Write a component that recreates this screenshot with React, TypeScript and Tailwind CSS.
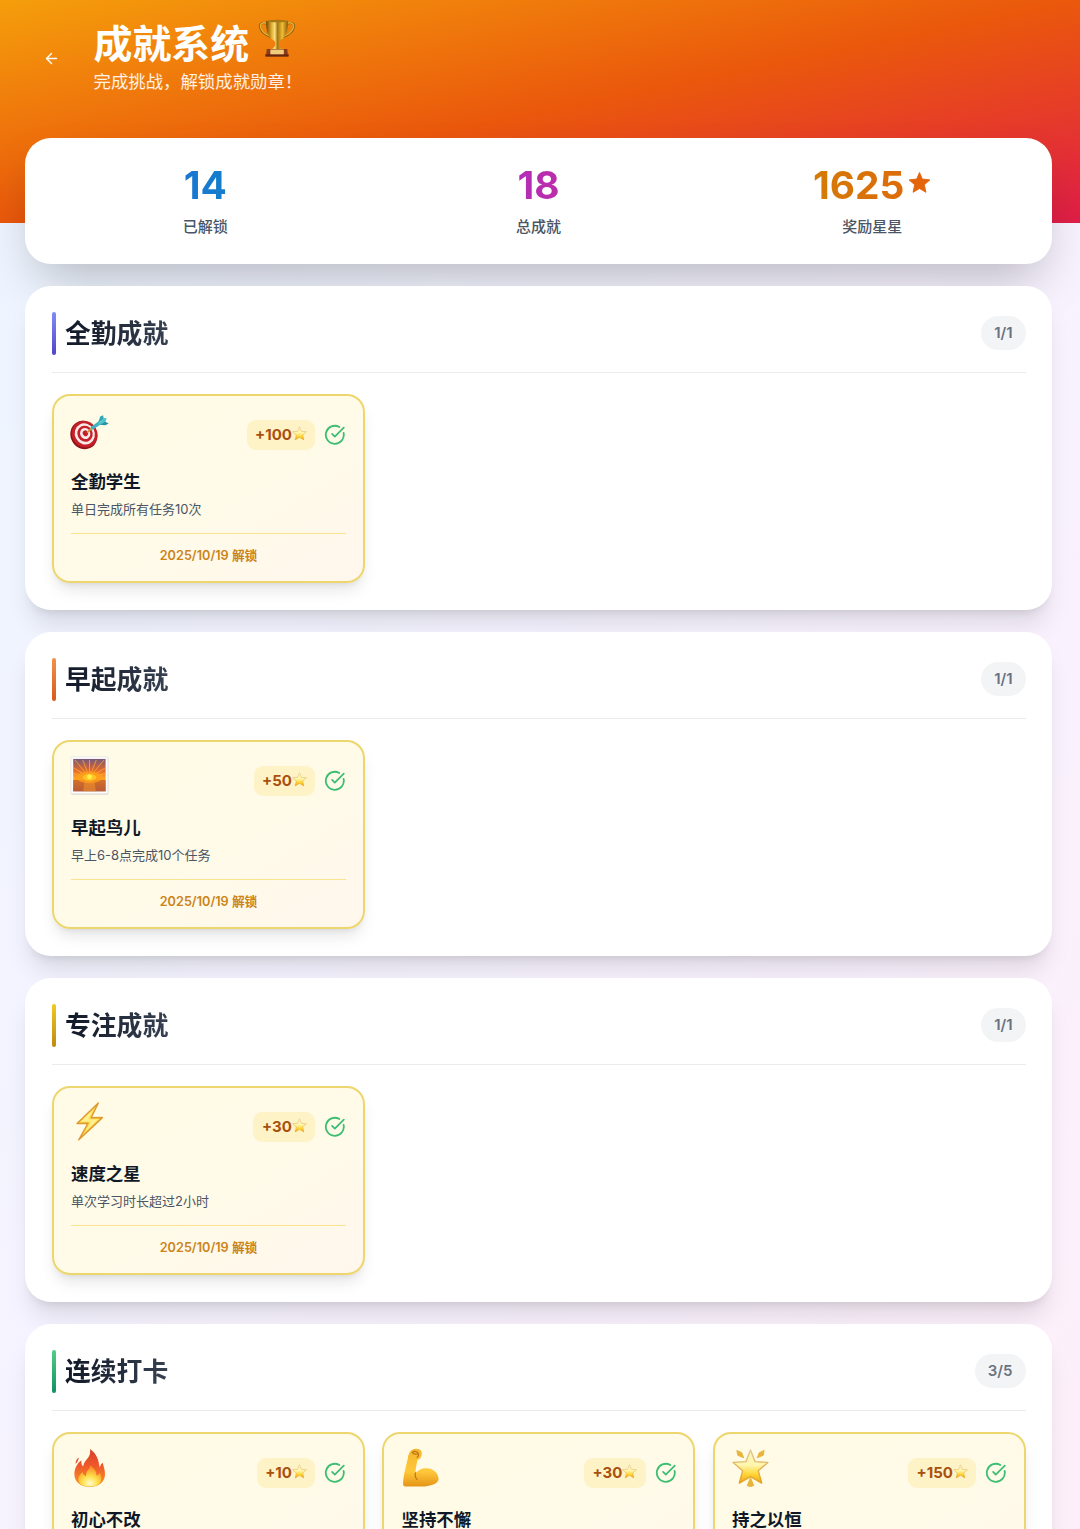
import { ReactNode } from "react"
import { ArrowLeft, CircleCheckBig } from "lucide-react"

type EmojiName = "target" | "sunrise" | "bolt" | "fire" | "muscle" | "glowStar"

interface Achievement {
  title: string
  description?: string
  reward: number
  emoji: EmojiName
  unlockedAt?: string
}

interface Category {
  name: string
  progress: string
  bar: string
  items: Achievement[]
}

const categories: Category[] = [
  {
    name: "全勤成就", progress: "1/1", bar: "from-[#818cf8] to-[#4f46c8]",
    items: [{ title: "全勤学生", description: "单日完成所有任务10次", reward: 100, emoji: "target", unlockedAt: "2025/10/19" }],
  },
  {
    name: "早起成就", progress: "1/1", bar: "from-[#f0924a] to-[#d9591a]",
    items: [{ title: "早起鸟儿", description: "早上6-8点完成10个任务", reward: 50, emoji: "sunrise", unlockedAt: "2025/10/19" }],
  },
  {
    name: "专注成就", progress: "1/1", bar: "from-[#f0c924] to-[#c08a10]",
    items: [{ title: "速度之星", description: "单次学习时长超过2小时", reward: 30, emoji: "bolt", unlockedAt: "2025/10/19" }],
  },
  {
    name: "连续打卡", progress: "3/5", bar: "from-[#4fcf85] to-[#129065]",
    items: [
      { title: "初心不改", reward: 10, emoji: "fire" },
      { title: "坚持不懈", reward: 30, emoji: "muscle" },
      { title: "持之以恒", reward: 150, emoji: "glowStar" },
    ],
  },
]

const STAR = "M20 2 L25.2 14.2 L38.4 15.3 L28.4 24 L31.4 37 L20 30.2 L8.6 37 L11.6 24 L1.6 15.3 L14.8 14.2 Z"

function Defs() {
  return (
    <svg width="0" height="0" className="absolute" aria-hidden="true">
      <defs>
        <linearGradient id="starFill" x1="0" y1="0" x2="0" y2="1">
          <stop offset="0" stopColor="#fff3b8" />
          <stop offset=".45" stopColor="#fff6b0" />
          <stop offset=".72" stopColor="#ffd83a" />
          <stop offset="1" stopColor="#f2a413" />
        </linearGradient>
        <linearGradient id="starEdge" x1="0" y1="0" x2="0" y2="1">
          <stop offset="0" stopColor="#e3c89a" />
          <stop offset="1" stopColor="#e2a11c" />
        </linearGradient>
        <linearGradient id="gold" x1="0" x2="1" y1="0" y2="0">
          <stop offset="0" stopColor="#6e4305" />
          <stop offset=".25" stopColor="#e2ad2c" />
          <stop offset=".4" stopColor="#f8e184" />
          <stop offset=".52" stopColor="#a8760e" />
          <stop offset=".75" stopColor="#edbd38" />
          <stop offset="1" stopColor="#8a5805" />
        </linearGradient>
        <linearGradient id="flame" x1="0" y1="0" x2="0" y2="1">
          <stop offset="0" stopColor="#d9402a" />
          <stop offset=".45" stopColor="#f0592b" />
          <stop offset="1" stopColor="#f8a023" />
        </linearGradient>
        <radialGradient id="flameCore" cx=".5" cy=".85" r=".75">
          <stop offset="0" stopColor="#fffbd0" />
          <stop offset=".45" stopColor="#ffe04b" />
          <stop offset="1" stopColor="#f9932b" />
        </radialGradient>
        <linearGradient id="skin" x1="0" y1="0" x2="0" y2="1">
          <stop offset="0" stopColor="#f5b52b" />
          <stop offset=".6" stopColor="#ffc83a" />
          <stop offset="1" stopColor="#e59418" />
        </linearGradient>
        <linearGradient id="sky" x1="0" y1="0" x2="0" y2="1">
          <stop offset="0" stopColor="#76587c" />
          <stop offset=".35" stopColor="#e0682f" />
          <stop offset=".6" stopColor="#ffa51f" />
          <stop offset="1" stopColor="#8c4a50" />
        </linearGradient>
      </defs>
    </svg>
  )
}

function StarEmoji({ className }: { className: string }) {
  return (
    <svg viewBox="0 0 40 40" className={className}>
      <path d={STAR} fill="url(#starFill)" stroke="url(#starEdge)" strokeWidth="1.6" strokeLinejoin="round" />
    </svg>
  )
}

function Trophy() {
  return (
    <svg viewBox="0 0 40 40" className="h-[39px] w-[38px]">
      <path d="M9.5 5.5C4 3.2 1.5 5.8 2.2 9.3c.9 4.6 5.4 7.8 11.3 10.2M30.5 5.5c5.5-2.3 8 .3 7.3 3.8-.9 4.6-5.4 7.8-11.3 10.2" fill="none" stroke="#8d5e0a" strokeWidth="2.3" />
      <path d="M9.5 5.2C4.5 3.2 2 5.8 2.6 9c.9 4.3 5.2 7.5 10.9 10M30.5 5.2c5-2 7.5.6 6.9 3.8-.9 4.3-5.2 7.5-10.9 10" fill="none" stroke="#e6b338" strokeWidth="1.4" />
      <path d="M8.5 2.5h23c.2 9.500-2 17.500-8.300 20.700-1.300.8-1.500 3-1.200 5 .2 1.500 1.800 2.800 3.800 4.300H14.200c2-1.500 3.600-2.800 3.800-4.300.3-2 .1-4.200-1.200-5C10.500 20 8.300 12 8.500 2.500z" fill="url(#gold)" />
      <ellipse cx="20" cy="2.7" rx="11.5" ry="1.3" fill="#a87813" />
      <path d="M9.2 32h21.600l.8 8H8.400z" fill="#8a3c17" />
      <path d="M7.7 37.6h24.600V40H7.700z" fill="#6b2610" />
      <path d="M13 32.7h14.200v5H13z" fill="#f0cd7c" />
    </svg>
  )
}

function Emoji({ name }: { name: EmojiName }) {
  const art: Record<EmojiName, ReactNode> = {
    target: (
      <>
        <ellipse cx="14.2" cy="20.6" rx="13.6" ry="14.8" transform="rotate(-28 14.2 20.6)" fill="#8f1218" />
        <ellipse cx="15" cy="19.6" rx="13" ry="14" transform="rotate(-28 15 19.6)" fill="#c5202a" />
        <ellipse cx="15.2" cy="19.4" rx="10.2" ry="11" transform="rotate(-28 15.2 19.4)" fill="#f7eae6" />
        <ellipse cx="15.4" cy="19.2" rx="7.8" ry="8.4" transform="rotate(-28 15.4 19.2)" fill="#c5202a" />
        <ellipse cx="15.6" cy="19" rx="5.2" ry="5.7" transform="rotate(-28 15.6 19)" fill="#f7eae6" />
        <ellipse cx="15.8" cy="18.8" rx="2.7" ry="3" transform="rotate(-28 15.8 18.8)" fill="#c5202a" />
        <path d="M17.500 18L22.500 13.500" stroke="#c79a3c" strokeWidth="1.8" />
        <path d="M21 12.500L29.500 6.500l2.300 3-9.300 6z" fill="#3fb3c0" />
        <path d="M28.800 8L31 1.500l3-1.300.6 3.800z" fill="#2fa6b5" />
        <path d="M29.800 10l6.600.6 3.200-1.900-3.800-2z" fill="#2b91a8" />
        <path d="M28.800 8.800l5.800-5.800 3 .4-1 3.200-6.800 3.800z" fill="#4dc3cc" />
      </>
    ),
    sunrise: (
      <>
        <rect x="1.2" y="1.6" width="38" height="38" rx="1" fill="#cfcaca" />
        <rect x=".9" y=".8" width="38" height="37.9" rx="1" fill="#fdfdfd" stroke="#e2dede" strokeWidth=".6" />
        <rect x="3.3" y="3" width="33.2" height="33.2" fill="url(#sky)" />
        <path d="M20 22L5 4M20 22L13 4M20 22V4M20 22L27 4M20 22L35 4M20 22L3.500 12M20 22l16.500-10M20 22L3.500 18M20 22l16.500-4" stroke="#ffb02f" strokeWidth=".9" opacity=".85" />
        <path d="M3.300 24.500h33.200v11.700H3.300z" fill="#c8602c" opacity=".75" />
        <path d="M15 24.500h10l1.500 11.700h-13z" fill="#f59a2c" opacity=".5" />
        <ellipse cx="20" cy="22" rx="13" ry="6" fill="#ff9d1c" opacity=".8" />
        <ellipse cx="20" cy="22" rx="7" ry="3.5" fill="#ffc325" />
        <circle cx="20" cy="21.300" r="2.500" fill="#fff04a" />
      </>
    ),
    bolt: (
      <>
        <path d="M29 1L7.300 22l11.200-.2L9 38.800 33.200 16l-11.500.2z" fill="#ffdc52" stroke="#dd9a2f" strokeWidth="1.5" strokeLinejoin="round" />
        <path d="M24.500 7L11 20.300l10.500-.3-5.300 9.500L29 17.700l-10.300.3z" fill="#fff08e" />
      </>
    ),
    fire: (
      <>
        <path d="M20.500 1c1 6-1.500 8.500-5 12.800-1.200 1.500-1.700 3.500-2 5.200-1.700-1.600-2.200-3.900-1.800-6.500C7.500 15.500 4.500 20.800 4.500 27c0 8 6.500 13 15.700 13s15.700-5 15.700-13c0-4.500-1.300-7.800-2.400-12-1.800 1.300-2.700 3.200-3 5.300C29.200 12 28 6.500 20.500 1z" fill="url(#flame)" />
        <path d="M5.800 16.500c0-3.200.8-5.300 3.200-6.800-.2 2.800-1.400 4.400-3.200 6.800z" fill="#e1512f" />
        <path d="M20.500 18c.5 3-2.300 4-3.500 7-.6 1.500-.7 3-.5 4-2.200-1-3.200-2.600-3.500-4.500-2.800 2.400-4.300 4.500-4.300 7.500 0 5 4.600 7.500 11.300 7.500 7.200 0 12-2.600 12-8 0-2.300-.5-4.300-1.500-6.200-.7 1.500-1.800 2.600-3.300 3.200C27.500 24.500 25 21 20.500 18z" fill="url(#flameCore)" />
      </>
    ),
    muscle: (
      <>
        <path d="M9.500 3.500C11.500.8 15.500.2 19 1.600c2 .9 2.700 3.300 2.200 5.700-.5 2.600-2 4.300-4.300 5-.8 4.200-2 8.500-2 13.200 4-4.300 9.500-5.800 15-4.100 5.200 1.600 8.600 6 8.600 10.600 0 4.300-8.500 7.500-17.500 7.500H4.500c-1.700 0-2.500-1.200-2.400-3.100C2.500 26.500 6 16.500 7 10.500c.3-2.600.9-5 2.500-7z" fill="url(#skin)" />
        <path d="M14.900 25.500c-.7 2.500-.2 4.900 1.500 6.700M11.500 4.500c2-1.300 4.500-1 6 .8-1.800 1.400-3.800 1.200-5.300.1M17.500 5.300c.8 1.600.3 3.200-1 4.300" fill="none" stroke="#bd7414" strokeWidth="1.2" strokeLinecap="round" />
      </>
    ),
    glowStar: (
      <>
        <path d="M20 2l4.700 12 13.100.8-9.800 8.500L31.500 36 20 29.300 8.500 36l3.500-12.700L2.200 14.800l13.100-.8z" fill="url(#starFill)" stroke="url(#starEdge)" strokeWidth="1.4" strokeLinejoin="round" />
        <path d="M6 2.500l5 2.300 2 5.200-6-2.500zM34 2.500l-5 2.300-2 5.200 6-2.500zM20 30.500l3.300 8-3.300 1.300-3.300-1.300z" fill="#e8b53c" stroke="#e8b53c" strokeLinejoin="round" />
      </>
    ),
  }
  return <svg viewBox="0 0 40 40" className="h-[39px] w-[39px]">{art[name]}</svg>
}

function AchievementCard({ item }: { item: Achievement }) {
  return (
    <div className="h-[189px] rounded-[18px] border-2 border-[#eed66e] bg-linear-to-br/srgb from-[#fffbe6] via-[#fffbe8] to-[#fff7ed] pt-[17px] pr-[16.5px] pl-[17.5px] shadow-lg">
      <div className="flex h-[48px] items-start justify-between">
        <div className={item.emoji === "target" ? "-ml-px pt-[2px]" : "-mt-[3px] -ml-px"}><Emoji name={item.emoji} /></div>
        <div className="mt-[7px] flex items-center gap-[9px]">
          <div className="flex h-[30px] items-center rounded-[9px] bg-[#fef3c7] px-[8.5px] pt-px text-[15px] font-bold text-[#a9500e]">
            +{item.reward}
            <StarEmoji className="mb-[3px] h-[15px] w-[15px]" />
          </div>
          <CircleCheckBig className="h-[21.6px] w-[21.6px] text-[#3dbe72]" strokeWidth={2} />
        </div>
      </div>
      <h3 className="mt-[12px] text-[17.4px] leading-[18px] font-bold text-gray-900">{item.title}</h3>
      {item.description && <p className="mt-[8px] text-[13px] leading-[21px] text-gray-600">{item.description}</p>}
      {item.unlockedAt && (
        <div className="mt-[13px] border-t border-[#fae48f] pt-[12px] text-center text-[12.7px] leading-[19px] font-semibold text-[#cb8419]">
          {item.unlockedAt} 解锁
        </div>
      )}
    </div>
  )
}

export default function App() {
  return (
    <div className="h-[1529px] overflow-hidden bg-linear-to-br/srgb from-[#ecf5ff] via-[#f6f3ff] to-[#fdeffa] font-[Inter,'Noto_Sans_CJK_SC',sans-serif]">
      <Defs />
      {/* Header */}
      <header className="flex h-[223px] items-start bg-linear-to-br/srgb from-[#f59e0b] via-[#ea580c] to-[#e11d48] pt-[22px] pl-[42.5px] text-white">
        <ArrowLeft className="mt-[28px] h-[17px] w-[17px]" strokeWidth={2} />
        <div className="ml-[34px]">
          <h1 className="flex h-[43px] items-center text-[38.9px] leading-[43px] font-bold">
            成就系统
            <span className="mb-[13px] ml-[9px]"><Trophy /></span>
          </h1>
          <p className="mt-[4px] text-[17.4px] leading-[26px] text-white/90">完成挑战，解锁成就勋章！</p>
        </div>
      </header>

      <main className="-mt-[85px] flex flex-col gap-[22px] pr-[28px] pl-[25px]">
        {/* Stats */}
        <div className="grid h-[125.5px] grid-cols-3 gap-[26px] rounded-[26px] bg-white px-[26px] pt-[26px] text-center shadow-2xl">
          <div>
            <div className="bg-linear-to-r/srgb from-[#2563eb] to-[#0891b2] bg-clip-text pl-px text-[38.9px] leading-[42px] font-bold text-transparent">14</div>
            <div className="mt-[9px] pl-px text-[15px] leading-[23px] font-medium text-gray-600">已解锁</div>
          </div>
          <div>
            <div className="bg-linear-to-r/srgb from-[#9333ea] to-[#db2777] bg-clip-text text-[38.9px] leading-[42px] font-bold text-transparent">18</div>
            <div className="mt-[9px] text-[15px] leading-[23px] font-medium text-gray-600">总成就</div>
          </div>
          <div>
            <div className="flex items-center justify-center bg-linear-to-r/srgb from-[#ca8a04] to-[#ea580c] bg-clip-text text-[38.9px] leading-[42px] font-bold text-transparent">
              1625
              <svg viewBox="0 0 24 24" className="mb-[5px] ml-[4px] h-[23px] w-[23px] text-[#e4640c]" fill="currentColor" stroke="currentColor" strokeWidth="1" strokeLinejoin="round">
                <path d="M12 1.600l2.900 6.800 7.900.9-5.800 5.100 1.700 7.800-6.700-4-6.700 4 1.700-7.800-5.800-5.100 7.900-.9z" />
              </svg>
            </div>
            <div className="mt-[9px] text-[15px] leading-[23px] font-medium text-gray-600">奖励星星</div>
          </div>
        </div>

        {/* Categories */}
        {categories.map((category) => (
          <section key={category.name} className="h-[324px] rounded-[26px] bg-white px-[26.5px] pt-[26.5px] shadow-xl">
            <div className="flex h-[61px] items-start justify-between border-b border-[#e9ebee]">
              <div className="flex h-[43px] items-center gap-[9px]">
                <span className={`h-[43px] w-[4.5px] rounded-full bg-linear-to-b/srgb ${category.bar}`} />
                <h2 className="bg-linear-to-r/srgb from-[#111827] to-[#374151] bg-clip-text text-[25.8px] leading-[43px] font-bold text-transparent">{category.name}</h2>
              </div>
              <span className="mt-[4px] rounded-full bg-gray-100 px-[13px] text-[15px] leading-[34px] font-semibold text-gray-500">{category.progress}</span>
            </div>
            <div className="mt-[20.5px] grid grid-cols-3 gap-[17.5px]">
              {category.items.map((item) => <AchievementCard key={item.title} item={item} />)}
            </div>
          </section>
        ))}
      </main>
    </div>
  )
}
